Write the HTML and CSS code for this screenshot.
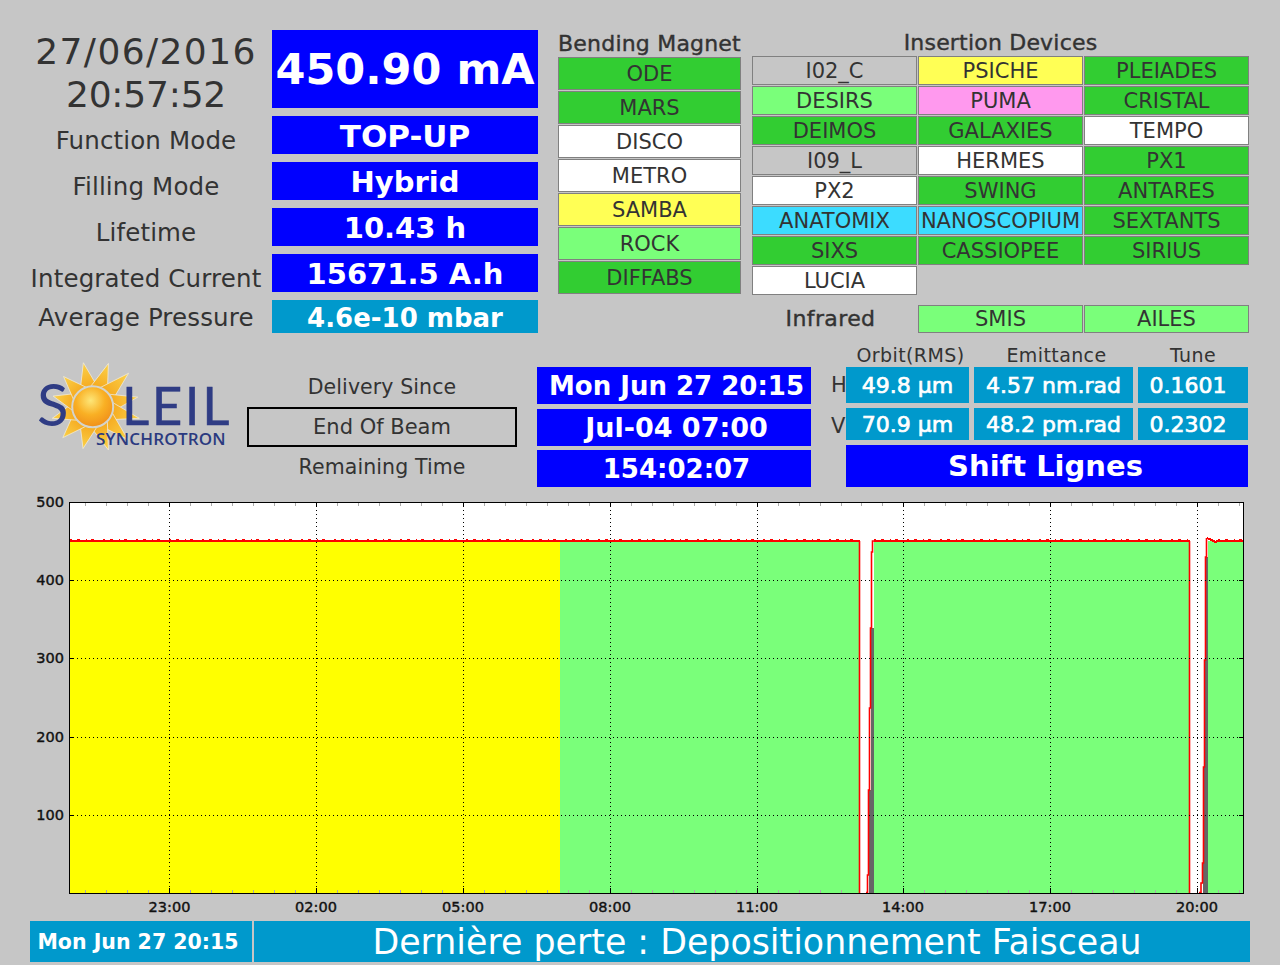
FILE: index.html
```html
<!DOCTYPE html>
<html lang="en">
<head>
<meta charset="utf-8">
<title>Machine status</title>
<link rel="stylesheet" href="styles.css">
</head>
<body>
<main class="page">
  <section class="top">
    <div class="status-col">
      <div class="status-row head">
        <div class="clock">27/06/2016<br><span class="clock-time">20:57:52</span></div>
        <div class="val current">450.90 mA</div>
      </div>
      <div class="status-row"><div class="lab">Function Mode</div><div class="val big wide">TOP-UP</div></div>
      <div class="status-row"><div class="lab">Filling Mode</div><div class="val big">Hybrid</div></div>
      <div class="status-row"><div class="lab">Lifetime</div><div class="val big">10.43 h</div></div>
      <div class="status-row"><div class="lab">Integrated Current</div><div class="val big">15671.5 A.h</div></div>
      <div class="status-row last"><div class="lab lab-last">Average Pressure</div><div class="val big teal">4.6e-10 mbar</div></div>
    </div>
    <div class="bm-col">
      <div class="title">Bending Magnet</div>
      <div class="bm-list">
        <div class="cell dark">ODE</div>
        <div class="cell dark">MARS</div>
        <div class="cell white">DISCO</div>
        <div class="cell white">METRO</div>
        <div class="cell yellow">SAMBA</div>
        <div class="cell light">ROCK</div>
        <div class="cell dark">DIFFABS</div>
      </div>
    </div>
    <div class="id-col">
      <div class="title id-title">Insertion Devices</div>
      <div class="id-grid">
        <div class="cell grey">I02_C</div><div class="cell yellow">PSICHE</div><div class="cell dark">PLEIADES</div>
        <div class="cell light">DESIRS</div><div class="cell pink">PUMA</div><div class="cell dark">CRISTAL</div>
        <div class="cell dark">DEIMOS</div><div class="cell dark">GALAXIES</div><div class="cell white">TEMPO</div>
        <div class="cell grey">I09_L</div><div class="cell white">HERMES</div><div class="cell dark">PX1</div>
        <div class="cell white">PX2</div><div class="cell dark">SWING</div><div class="cell dark">ANTARES</div>
        <div class="cell cyan">ANATOMIX</div><div class="cell cyan">NANOSCOPIUM</div><div class="cell dark">SEXTANTS</div>
        <div class="cell dark">SIXS</div><div class="cell dark">CASSIOPEE</div><div class="cell dark">SIRIUS</div>
        <div class="cell white">LUCIA</div>
      </div>
      <div class="ir-grid">
        <div class="ir-title">Infrared</div><div class="cell light">SMIS</div><div class="cell light">AILES</div>
      </div>
    </div>
  </section>

  <section class="mid">
    <svg class="logo" width="194" height="92" viewBox="0 0 194 92" role="img" aria-label="Soleil Synchrotron">
      <defs>
        <radialGradient id="ball" cx="0.45" cy="0.35" r="0.7">
          <stop offset="0" stop-color="#fde678"/>
          <stop offset="0.5" stop-color="#f9b024"/>
          <stop offset="1" stop-color="#ef8a18"/>
        </radialGradient>
        <linearGradient id="ray" x1="0" y1="0" x2="0" y2="1">
          <stop offset="0" stop-color="#fbd24a"/>
          <stop offset="1" stop-color="#f5a81e"/>
        </linearGradient>
      </defs>
      <g fill="url(#ray)" stroke="#f2eddc" stroke-width="0.7">
        <polygon points="0,-45 9,-18 -9,-18" transform="translate(55.7 44.7) rotate(-12)"/>
        <polygon points="0,-46 9,-18 -9,-18" transform="translate(55.7 44.7) rotate(20)"/>
        <polygon points="0,-49 9,-18 -9,-18" transform="translate(55.7 44.7) rotate(47)"/>
        <polygon points="0,-46 9,-18 -9,-18" transform="translate(55.7 44.7) rotate(78)"/>
        <polygon points="0,-48 9,-18 -9,-18" transform="translate(55.7 44.7) rotate(104)"/>
        <polygon points="0,-48 9,-18 -9,-18" transform="translate(55.7 44.7) rotate(133)"/>
        <polygon points="0,-46 9,-18 -9,-18" transform="translate(55.7 44.7) rotate(160)"/>
        <polygon points="0,-43 9,-18 -9,-18" transform="translate(55.7 44.7) rotate(193)"/>
        <polygon points="0,-43 9,-18 -9,-18" transform="translate(55.7 44.7) rotate(224)"/>
        <polygon points="0,-42 9,-18 -9,-18" transform="translate(55.7 44.7) rotate(254)"/>
        <polygon points="0,-41 9,-18 -9,-18" transform="translate(55.7 44.7) rotate(285)"/>
        <polygon points="0,-42 9,-18 -9,-18" transform="translate(55.7 44.7) rotate(316)"/>
      </g>
      <circle cx="55.7" cy="44.7" r="20.5" fill="url(#ball)" stroke="#d4d4cc" stroke-width="2"/>
      <text class="logo-s" x="0" y="64">S</text>
      <text class="logo-word" x="85" y="63">LEIL</text>
      <text class="logo-sub" x="59" y="83">SYNCHROTRON</text>
    </svg>
    <div class="delivery">
      <div class="del-lab">Delivery Since</div>
      <div class="del-box">End Of Beam</div>
      <div class="del-lab">Remaining Time</div>
    </div>
    <div class="times">
      <div class="val time time-long">Mon Jun 27 20:15</div>
      <div class="val time">Jul-04 07:00</div>
      <div class="val time time-short">154:02:07</div>
    </div>
    <div class="beam">
      <div class="beam-grid">
        <div></div><div class="b-head b-off">Orbit(RMS)</div><div class="b-head b-off">Emittance</div><div class="b-head">Tune</div>
        <div class="b-side">H</div><div class="val b-val">49.8 µm</div><div class="val b-val">4.57 nm.rad</div><div class="val b-val b-tune">0.1601</div>
        <div class="b-side">V</div><div class="val b-val">70.9 µm</div><div class="val b-val">48.2 pm.rad</div><div class="val b-val b-tune">0.2302</div>
      </div>
      <div class="val shift">Shift Lignes</div>
    </div>
  </section>

  <svg class="chart" width="1280" height="424" viewBox="0 -10 1280 424" role="img" aria-label="Beam current over time">
    <rect x="69" y="2" width="1175" height="391" fill="#fff"/>
    <rect x="70" y="41" width="490" height="352" fill="#ffff00"/>
    <rect x="560" y="41" width="300" height="352" fill="#7aff7a"/>
    <rect x="874" y="41" width="316" height="352" fill="#7aff7a"/>
    <rect x="1208" y="41" width="36" height="352" fill="#7aff7a"/>
    <rect x="871" y="128" width="3" height="265" fill="#666"/>
    <rect x="869" y="290" width="2" height="103" fill="#666"/>
    <rect x="1205" y="57" width="3" height="336" fill="#666"/>
    <rect x="1204" y="160" width="1" height="233" fill="#666"/>
    <rect x="1203" y="267" width="1" height="126" fill="#666"/>
    <path class="trace" d="M70 41H860"/>
    <path class="trace" d="M874 41H1190"/>
    <path class="trace" d="M1207 38L1209 39L1212 40L1215 42L1218 41H1244"/>
    <path class="jitter" d="M70 39.5H860M874 39.5H1190M1218 39.5H1244"/>
    <path class="trace-thin" d="M859.5 41V393M1189.5 41V393"/>
    <path class="trace-thin" d="M866 392.5H867.5V375H868.5V290H869.5V208H870.5V128H871.5V52H872.5V41H874"/>
    <path class="trace-thin" d="M1199 392.5H1201V383H1202.5V363H1203.5V267H1204.5V160H1205.5V57H1206.5V38"/>
    <path class="grid" d="M169 2V393M316 2V393M463 2V393M610 2V393M757 2V393M903 2V393M1050 2V393M1197 2V393M69 80H1244M69 158H1244M69 237H1244M69 315H1244"/>
    <path class="major" d="M169 2V7M316 2V7M463 2V7M610 2V7M757 2V7M903 2V7M1050 2V7M1197 2V7M169 388V393M316 388V393M463 388V393M610 388V393M757 388V393M903 388V393M1050 388V393M1197 388V393M69 80H74M69 158H74M69 237H74M69 315H74M1239 80H1244M1239 158H1244M1239 237H1244M1239 315H1244"/>
    <path class="minor" d="M85 3V6M106 3V6M127 3V6M148 3V6M190 3V6M211 3V6M232 3V6M253 3V6M274 3V6M295 3V6M337 3V6M358 3V6M379 3V6M400 3V6M421 3V6M442 3V6M484 3V6M505 3V6M526 3V6M547 3V6M568 3V6M589 3V6M631 3V6M652 3V6M673 3V6M694 3V6M715 3V6M736 3V6M778 3V6M799 3V6M820 3V6M841 3V6M861 3V6M882 3V6M924 3V6M945 3V6M966 3V6M987 3V6M1008 3V6M1029 3V6M1071 3V6M1092 3V6M1113 3V6M1134 3V6M1155 3V6M1176 3V6M1218 3V6M1239 3V6M85 390V393M106 390V393M127 390V393M148 390V393M190 390V393M211 390V393M232 390V393M253 390V393M274 390V393M295 390V393M337 390V393M358 390V393M379 390V393M400 390V393M421 390V393M442 390V393M484 390V393M505 390V393M526 390V393M547 390V393M568 390V393M589 390V393M631 390V393M652 390V393M673 390V393M694 390V393M715 390V393M736 390V393M778 390V393M799 390V393M820 390V393M841 390V393M924 390V393M945 390V393M966 390V393M987 390V393M1008 390V393M1029 390V393M1071 390V393M1092 390V393M1113 390V393M1134 390V393M1155 390V393M1176 390V393M1218 390V393M1239 390V393"/>
    <rect class="frame" x="69.5" y="2.5" width="1174" height="391"/>
    <g class="ax" text-anchor="end">
      <text x="64" y="7">500</text><text x="64" y="85">400</text><text x="64" y="163">300</text><text x="64" y="242">200</text><text x="64" y="320">100</text>
    </g>
    <g class="ax" text-anchor="middle">
      <text x="169.5" y="412">23:00</text><text x="316" y="412">02:00</text><text x="463" y="412">05:00</text><text x="610" y="412">08:00</text><text x="757" y="412">11:00</text><text x="903" y="412">14:00</text><text x="1050" y="412">17:00</text><text x="1197" y="412">20:00</text>
    </g>
  </svg>

  <footer class="foot">
    <div class="val foot-time">Mon Jun 27 20:15</div>
    <div class="val foot-msg">Dernière perte : Depositionnement Faisceau</div>
  </footer>
</main>
</body>
</html>
```
FILE: styles.css
```css
html, body { margin: 0; padding: 0; }
body {
  width: 1280px;
  height: 965px;
  overflow: hidden;
  background: #c6c6c6;
  color: #333;
  font-family: "DejaVu Sans", sans-serif;
}
.page { display: flex; flex-direction: column; padding-top: 30px; }

.val {
  display: flex;
  align-items: center;
  justify-content: center;
  background: #0000ff;
  color: #fff;
  white-space: nowrap;
}

/* top block */
.top { display: flex; height: 303px; margin-left: 30px; }
.status-col { width: 508px; display: flex; flex-direction: column; gap: 8px; }
.status-row { display: grid; grid-template-columns: 232px 266px; grid-template-rows: 38px; column-gap: 10px; }
.status-row.head { grid-template-rows: 78px; }
.status-row.last { grid-template-rows: 33px; }
.clock { font-size: 36px; line-height: 43px; text-align: center; letter-spacing: 1.4px; white-space: nowrap; }
.clock-time { letter-spacing: -0.2px; }
.current { font-size: 43px; font-weight: bold; }
.lab { font-size: 24.5px; text-align: center; line-height: 38px; padding-top: 6px; white-space: nowrap; letter-spacing: 0.15px; }
.lab-last { padding-top: 1px; line-height: 33px; }
.big { font-size: 29px; font-weight: bold; padding-top: 2px; box-sizing: border-box; }
.wide { font-size: 31px; }
.teal { background: #0099cc; font-size: 26px; }

.bm-col { width: 183px; margin-left: 20px; }
.title { font-size: 22px; line-height: 27px; text-align: center; white-space: nowrap; letter-spacing: 0.2px; -webkit-text-stroke: 0.4px #333; }
.bm-list { display: grid; grid-auto-rows: 33px; row-gap: 1px; }
.id-col { width: 497px; margin-left: 11px; }
.id-title { line-height: 26px; }
.id-grid { display: grid; grid-template-columns: repeat(3, 165px); column-gap: 1px; grid-auto-rows: 29px; row-gap: 1px; }
.ir-grid { display: grid; grid-template-columns: 165px 165px 165px; column-gap: 1px; height: 28px; margin-top: 10px; }
.ir-title { font-size: 22px; text-align: center; line-height: 28px; padding-right: 8px; letter-spacing: 0.4px; -webkit-text-stroke: 0.4px #333; }
.cell {
  display: flex; align-items: center; justify-content: center;
  box-sizing: border-box;
  border: 1px solid #808080;
  font-size: 21px;
  color: #333;
  white-space: nowrap;
  background: #c6c6c6;
}
.dark { background: #32cd32; }
.light { background: #7aff7a; }
.white { background: #fff; }
.yellow { background: #ffff55; }
.pink { background: #ff99ee; }
.cyan { background: #3cdcff; }
.grey { background: #c6c6c6; }

/* middle block */
.mid { display: flex; height: 144px; margin-top: 10px; }
.logo { margin: 19px 0 0 37px; flex: none; }
.delivery { width: 270px; margin-left: 16px; margin-top: 24px; display: flex; flex-direction: column; align-items: stretch; }
.del-lab { font-size: 20.5px; line-height: 41px; height: 40px; text-align: center; letter-spacing: 0.1px; }
.del-box { box-sizing: border-box; height: 40px; border: 2px solid #000; font-size: 21px; display: flex; align-items: center; justify-content: center; }
.times { width: 274px; height: 120px; margin-left: 20px; margin-top: 24px; display: flex; flex-direction: column; justify-content: space-between; }
.time { height: 37px; font-size: 27px; font-weight: bold; padding-left: 5px; }
.time-long, .time-short { font-size: 26px; }
.beam { margin-left: 20px; width: 417px; }
.beam-grid { display: grid; grid-template-columns: 10px 123px 159px 110px; column-gap: 5px; grid-template-rows: 19px 36px 32px; row-gap: 5px; }
.b-head { font-size: 19px; text-align: center; line-height: 24px; letter-spacing: 0.4px; }
.b-off { padding-left: 6px; }
.b-side { font-size: 21px; line-height: 36px; }
.b-val { font-size: 22px; -webkit-text-stroke: 0.7px #fff; background: #0099cc; }
.b-tune { padding-right: 10px; }
.shift { height: 42px; margin: 5px 0 0 15px; font-size: 29px; font-weight: bold; padding-right: 3px; box-sizing: border-box; }

/* chart */
.chart { display: block; flex: none; margin-top: 3px; }
.trace { fill: none; stroke: #ff0000; stroke-width: 2; shape-rendering: crispEdges; }
.trace-thin { fill: none; stroke: #ff0000; stroke-width: 1.6; }
.jitter { fill: none; stroke: #ff0000; stroke-width: 1; stroke-dasharray: 2 5 3 6 1 4 3 9; shape-rendering: crispEdges; }
.grid { fill: none; stroke: #000; stroke-width: 1; stroke-dasharray: 1 3; shape-rendering: crispEdges; }
.major { fill: none; stroke: #000; stroke-width: 1; shape-rendering: crispEdges; }
.minor { fill: none; stroke: #aaa; stroke-width: 1; shape-rendering: crispEdges; }
.frame { fill: none; stroke: #000; stroke-width: 1; shape-rendering: crispEdges; }
.ax text { font-family: "DejaVu Sans", sans-serif; font-size: 14.5px; fill: #111; stroke: #111; stroke-width: 0.4px; }
.logo-s { font-family: Lato, sans-serif; font-size: 58px; fill: #2f3c84; }
.logo-word { font-family: Lato, sans-serif; font-size: 53px; letter-spacing: 2.5px; fill: #2f3c84; stroke: #2f3c84; stroke-width: 0.5px; }
.logo-sub { font-family: "Open Sans", sans-serif; font-size: 17px; fill: #2b3a80; font-weight: 600; letter-spacing: 0.2px; }

/* footer */
.foot { display: flex; gap: 2px; margin: 7px 30px 0; height: 41px; }
.foot-time { width: 222px; background: #0099cc; font-size: 20.5px; font-weight: bold; flex: none; padding-right: 6px; box-sizing: border-box; }
.foot-msg { flex: 1; background: #0099cc; font-size: 34.8px; padding-left: 10px; }
```
